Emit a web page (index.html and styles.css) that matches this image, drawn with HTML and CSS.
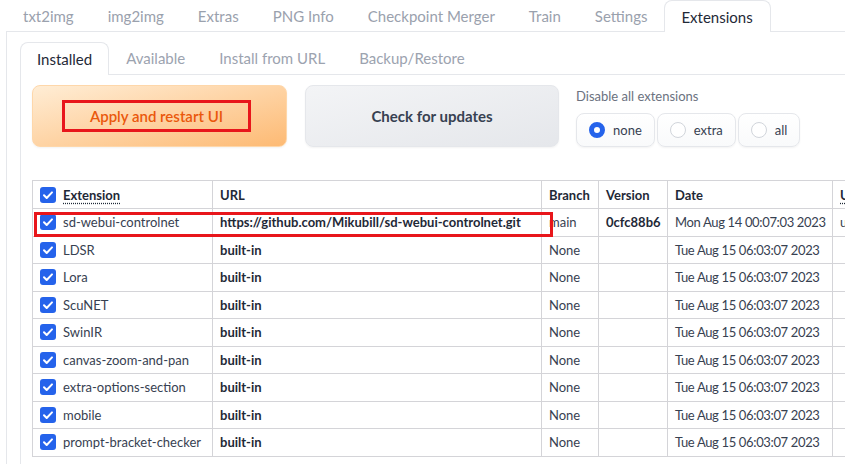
FILE: index.html
```html
<!DOCTYPE html>
<html lang="en">
<head>
<meta charset="utf-8">
<title>Extensions</title>
<link rel="stylesheet" href="styles.css">
</head>
<body>
<div class="app">
  <nav class="tabs">
    <div class="tab">txt2img</div>
    <div class="tab">img2img</div>
    <div class="tab">Extras</div>
    <div class="tab">PNG Info</div>
    <div class="tab">Checkpoint Merger</div>
    <div class="tab">Train</div>
    <div class="tab">Settings</div>
    <div class="tab active">Extensions</div>
  </nav>
  <div class="panel">
    <nav class="subtabs">
      <div class="subtab active">Installed</div>
      <div class="subtab">Available</div>
      <div class="subtab">Install from URL</div>
      <div class="subtab">Backup/Restore</div>
    </nav>
    <div class="inner">
      <div class="actions">
        <button class="btn btn-primary"><span class="mark">Apply and restart UI</span></button>
        <button class="btn btn-secondary">Check for updates</button>
        <div class="radio-block">
          <div class="radio-label">Disable all extensions</div>
          <div class="radios">
            <label class="radio checked"><span class="circle"></span>none</label>
            <label class="radio"><span class="circle"></span>extra</label>
            <label class="radio"><span class="circle"></span>all</label>
          </div>
        </div>
      </div>
      <div class="table-wrap">
        <table class="ext-table">
          <colgroup>
            <col class="c-ext"><col class="c-url"><col class="c-branch"><col class="c-ver"><col class="c-date"><col class="c-upd">
          </colgroup>
          <thead>
            <tr>
              <th><span class="cell-ext"><span class="cb"><svg viewBox="0 0 16 16" width="16" height="16"><rect width="16" height="16" rx="3" fill="#2563eb"/><path d="M4 8.3l2.7 2.7 5.3-5.6" fill="none" stroke="#fff" stroke-width="2" stroke-linecap="round" stroke-linejoin="round"/></svg></span><abbr class="abbr">Extension</abbr></span></th>
              <th>URL</th>
              <th>Branch</th>
              <th>Version</th>
              <th>Date</th>
              <th><abbr class="abbr">Update</abbr></th>
            </tr>
          </thead>
          <tbody>
            <tr>
              <td><span class="cell-ext"><span class="cb"><svg viewBox="0 0 16 16" width="16" height="16"><rect width="16" height="16" rx="3" fill="#2563eb"/><path d="M4 8.3l2.7 2.7 5.3-5.6" fill="none" stroke="#fff" stroke-width="2" stroke-linecap="round" stroke-linejoin="round"/></svg></span>sd-webui-controlnet</span></td>
              <td class="url">https://github.com/Mikubill/sd-webui-controlnet.git</td>
              <td>main</td>
              <td class="ver">0cfc88b6</td>
              <td class="date">Mon Aug 14 00:07:03 2023</td>
              <td>unknown</td>
            </tr>
            <tr>
              <td><span class="cell-ext"><span class="cb"><svg viewBox="0 0 16 16" width="16" height="16"><rect width="16" height="16" rx="3" fill="#2563eb"/><path d="M4 8.3l2.7 2.7 5.3-5.6" fill="none" stroke="#fff" stroke-width="2" stroke-linecap="round" stroke-linejoin="round"/></svg></span>LDSR</span></td>
              <td class="url">built-in</td><td>None</td><td></td><td class="date">Tue Aug 15 06:03:07 2023</td><td></td>
            </tr>
            <tr>
              <td><span class="cell-ext"><span class="cb"><svg viewBox="0 0 16 16" width="16" height="16"><rect width="16" height="16" rx="3" fill="#2563eb"/><path d="M4 8.3l2.7 2.7 5.3-5.6" fill="none" stroke="#fff" stroke-width="2" stroke-linecap="round" stroke-linejoin="round"/></svg></span>Lora</span></td>
              <td class="url">built-in</td><td>None</td><td></td><td class="date">Tue Aug 15 06:03:07 2023</td><td></td>
            </tr>
            <tr>
              <td><span class="cell-ext"><span class="cb"><svg viewBox="0 0 16 16" width="16" height="16"><rect width="16" height="16" rx="3" fill="#2563eb"/><path d="M4 8.3l2.7 2.7 5.3-5.6" fill="none" stroke="#fff" stroke-width="2" stroke-linecap="round" stroke-linejoin="round"/></svg></span>ScuNET</span></td>
              <td class="url">built-in</td><td>None</td><td></td><td class="date">Tue Aug 15 06:03:07 2023</td><td></td>
            </tr>
            <tr>
              <td><span class="cell-ext"><span class="cb"><svg viewBox="0 0 16 16" width="16" height="16"><rect width="16" height="16" rx="3" fill="#2563eb"/><path d="M4 8.3l2.7 2.7 5.3-5.6" fill="none" stroke="#fff" stroke-width="2" stroke-linecap="round" stroke-linejoin="round"/></svg></span>SwinIR</span></td>
              <td class="url">built-in</td><td>None</td><td></td><td class="date">Tue Aug 15 06:03:07 2023</td><td></td>
            </tr>
            <tr>
              <td><span class="cell-ext"><span class="cb"><svg viewBox="0 0 16 16" width="16" height="16"><rect width="16" height="16" rx="3" fill="#2563eb"/><path d="M4 8.3l2.7 2.7 5.3-5.6" fill="none" stroke="#fff" stroke-width="2" stroke-linecap="round" stroke-linejoin="round"/></svg></span>canvas-zoom-and-pan</span></td>
              <td class="url">built-in</td><td>None</td><td></td><td class="date">Tue Aug 15 06:03:07 2023</td><td></td>
            </tr>
            <tr>
              <td><span class="cell-ext"><span class="cb"><svg viewBox="0 0 16 16" width="16" height="16"><rect width="16" height="16" rx="3" fill="#2563eb"/><path d="M4 8.3l2.7 2.7 5.3-5.6" fill="none" stroke="#fff" stroke-width="2" stroke-linecap="round" stroke-linejoin="round"/></svg></span>extra-options-section</span></td>
              <td class="url">built-in</td><td>None</td><td></td><td class="date">Tue Aug 15 06:03:07 2023</td><td></td>
            </tr>
            <tr>
              <td><span class="cell-ext"><span class="cb"><svg viewBox="0 0 16 16" width="16" height="16"><rect width="16" height="16" rx="3" fill="#2563eb"/><path d="M4 8.3l2.7 2.7 5.3-5.6" fill="none" stroke="#fff" stroke-width="2" stroke-linecap="round" stroke-linejoin="round"/></svg></span>mobile</span></td>
              <td class="url">built-in</td><td>None</td><td></td><td class="date">Tue Aug 15 06:03:07 2023</td><td></td>
            </tr>
            <tr>
              <td><span class="cell-ext"><span class="cb"><svg viewBox="0 0 16 16" width="16" height="16"><rect width="16" height="16" rx="3" fill="#2563eb"/><path d="M4 8.3l2.7 2.7 5.3-5.6" fill="none" stroke="#fff" stroke-width="2" stroke-linecap="round" stroke-linejoin="round"/></svg></span>prompt-bracket-checker</span></td>
              <td class="url">built-in</td><td>None</td><td></td><td class="date">Tue Aug 15 06:03:07 2023</td><td></td>
            </tr>
          </tbody>
        </table>
        <div class="row-mark"></div>
      </div>
    </div>
  </div>
</div>
</body>
</html>
```
FILE: styles.css
```css
* { box-sizing: border-box; }
html, body {
  margin: 0;
  padding: 0;
  width: 845px;
  height: 464px;
  overflow: hidden;
  background: #fff;
}
body {
  font-family: Lato, "Liberation Sans", sans-serif;
  color: #1f2937;
}
.app {
  padding-left: 6px;
}
.tabs {
  display: flex;
  height: 31px;
  position: relative;
  z-index: 1;
}
.tab {
  padding: 1px 17px 0;
  font-size: 15px;
  line-height: 31px;
  color: #9aa1ad;
  white-space: nowrap;
}
.tab.active {
  color: #1f2937;
  background: #fff;
  border: 1px solid #e5e7eb;
  border-bottom: none;
  border-radius: 8px 8px 0 0;
  height: 32px;
  line-height: 30px;
  padding: 1px 17px 0 16px;
}
.panel {
  border-top: 1px solid #e5e7eb;
  border-left: 1px solid #e5e7eb;
  padding: 10px 0 0 13px;
  height: 440px;
}
.subtabs {
  display: flex;
  height: 32px;
  position: relative;
  z-index: 1;
}
.subtab {
  padding: 0 17px;
  font-size: 15px;
  line-height: 33px;
  color: #9ca3af;
  white-space: nowrap;
}
.subtab.active {
  color: #1f2937;
  background: #fff;
  border: 1px solid #e5e7eb;
  border-bottom: none;
  border-radius: 8px 8px 0 0;
  height: 33px;
  padding: 0 16px;
  line-height: 33px;
}
.inner {
  border-top: 1px solid #e5e7eb;
  border-left: 1px solid #e5e7eb;
  padding: 10px 0 0 11px;
  height: 400px;
}
.actions {
  display: flex;
  align-items: flex-start;
}
.btn {
  height: 62px;
  border-radius: 8px;
  font-family: inherit;
  font-size: 15px;
  font-weight: 700;
  display: flex;
  align-items: center;
  justify-content: center;
  box-shadow: 0 1px 2px rgba(0,0,0,0.05);
  padding: 0;
}
.btn-primary {
  width: 255px;
  background: linear-gradient(to bottom right, #ffedd5, #fdba74);
  border: 1px solid #fed7aa;
  color: #ea580c;
  padding-right: 6px;
}
.mark {
  border: 3px solid #e8161b;
  padding: 4px 25px;
  font-weight: 600;
}
.btn-secondary {
  width: 254px;
  margin-left: 18px;
  background: linear-gradient(to bottom right, #f3f4f6, #e5e7eb);
  border: 1px solid #e5e7eb;
  color: #374151;
}
.radio-block {
  margin-left: 17px;
  padding-top: 2px;
}
.radio-label {
  font-size: 13px;
  color: #6b7280;
  line-height: 18px;
  margin-bottom: 8px;
}
.radios {
  display: flex;
  gap: 2px;
}
.radio {
  display: flex;
  align-items: center;
  gap: 8px;
  height: 34px;
  padding: 0 12px;
  border: 1px solid #e5e7eb;
  border-radius: 8px;
  background: linear-gradient(to bottom, #ffffff, #f9fafb);
  box-shadow: 0 1px 2px rgba(0,0,0,0.05);
  font-size: 13px;
  color: #374151;
}
.circle {
  width: 16px;
  height: 16px;
  border-radius: 50%;
  border: 1px solid #d1d5db;
  background: #fff;
  flex: none;
}
.radio.checked .circle {
  border: 5px solid #2563eb;
  background: #fff;
}
.table-wrap {
  position: relative;
  margin-top: 33px;
}
.ext-table {
  border-collapse: collapse;
  table-layout: fixed;
  width: 900px;
  font-size: 13px;
  color: #374151;
}
.c-ext { width: 180px; }
.c-url { width: 329px; }
.c-branch { width: 57px; }
.c-ver { width: 69px; }
.c-date { width: 165px; }
.c-upd { width: 100px; }
.ext-table th,
.ext-table td {
  border: 1px solid #d4d4d8;
  padding: 0 7px;
  text-align: left;
  white-space: nowrap;
  overflow: hidden;
  height: 27.5px;
}
.ext-table th {
  font-weight: 700;
  color: #1f2937;
  height: 28px;
}
.ext-table .date {
  letter-spacing: -0.35px;
}
.cell-ext {
  display: flex;
  align-items: center;
  gap: 7px;
}
.cb {
  display: flex;
  width: 16px;
  height: 16px;
}
.abbr {
  text-decoration: underline dotted;
  text-underline-offset: 3px;
}
.url, .ver {
  font-weight: 700;
  color: #1f2937;
}
.row-mark {
  position: absolute;
  left: 2px;
  top: 32px;
  width: 519px;
  height: 25px;
  border: 3px solid #e8161b;
  pointer-events: none;
}
```
